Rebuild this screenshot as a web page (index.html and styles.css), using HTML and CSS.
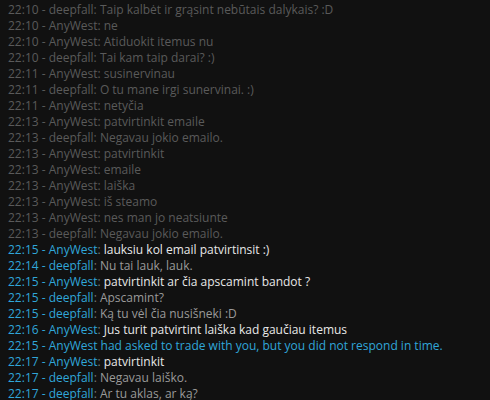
FILE: index.html
```html
<!DOCTYPE html>
<html lang="en">
<head>
    <meta charset="UTF-8">
    <title>Chat log</title>
    <link rel="stylesheet" href="styles.css">
</head>
<body>
    <div class="log">
        <div class="line old">22:10 - deepfall: Taip kalbėt ir grąsint nebūtais dalykais? :D</div>
        <div class="line old">22:10 - AnyWest: ne</div>
        <div class="line old">22:10 - AnyWest: Atiduokit itemus nu</div>
        <div class="line old">22:10 - deepfall: Tai kam taip darai? :)</div>
        <div class="line old">22:11 - AnyWest: susinervinau</div>
        <div class="line old">22:11 - deepfall: O tu mane irgi sunervinai. :)</div>
        <div class="line old">22:11 - AnyWest: netyčia</div>
        <div class="line old">22:13 - AnyWest: patvirtinkit emaile</div>
        <div class="line old">22:13 - deepfall: Negavau jokio emailo.</div>
        <div class="line old">22:13 - AnyWest: patvirtinkit</div>
        <div class="line old">22:13 - AnyWest: emaile</div>
        <div class="line old">22:13 - AnyWest: laiška</div>
        <div class="line old">22:13 - AnyWest: iš steamo</div>
        <div class="line old">22:13 - AnyWest: nes man jo neatsiunte</div>
        <div class="line old">22:13 - deepfall: Negavau jokio emailo.</div>
        <div class="line"><span class="who">22:15 - AnyWest</span><span class="sep">:</span> <span class="them">lauksiu kol email patvirtinsit :)</span></div>
        <div class="line"><span class="who">22:14 - deepfall</span><span class="sep">:</span> <span class="me">Nu tai lauk, lauk.</span></div>
        <div class="line"><span class="who">22:15 - AnyWest</span><span class="sep">:</span> <span class="them">patvirtinkit ar čia apscamint bandot ?</span></div>
        <div class="line"><span class="who">22:15 - deepfall</span><span class="sep">:</span> <span class="me">Apscamint?</span></div>
        <div class="line"><span class="who">22:15 - deepfall</span><span class="sep">:</span> <span class="me">Ką tu vėl čia nusišneki :D</span></div>
        <div class="line"><span class="who">22:16 - AnyWest</span><span class="sep">:</span> <span class="them">Jus turit patvirtint laiška kad gaučiau itemus</span></div>
        <div class="line who">22:15 - AnyWest had asked to trade with you, but you did not respond in time.</div>
        <div class="line"><span class="who">22:17 - AnyWest</span><span class="sep">:</span> <span class="them">patvirtinkit</span></div>
        <div class="line"><span class="who">22:17 - deepfall</span><span class="sep">:</span> <span class="me">Negavau laiško.</span></div>
        <div class="line"><span class="who">22:17 - deepfall</span><span class="sep">:</span> <span class="me">Ar tu aklas, ar ką?</span></div>
    </div>
</body>
</html>
```

FILE: styles.css
```css
html, body {
    margin: 0;
    padding: 0;
    background-color: #111111;
}
.log {
    padding: 2px 8px 0;
    font-family: "Open Sans", sans-serif;
    font-size: 12px;
}
.line {
    height: 16px;
    line-height: 16px;
    white-space: nowrap;
}
.old {
    color: #5a5a5a;
}
.who {
    color: #30a6d9;
}
.sep {
    color: #787878;
}
.them {
    color: #e8e8e8;
}
.me {
    color: #9a9a9a;
}
```
